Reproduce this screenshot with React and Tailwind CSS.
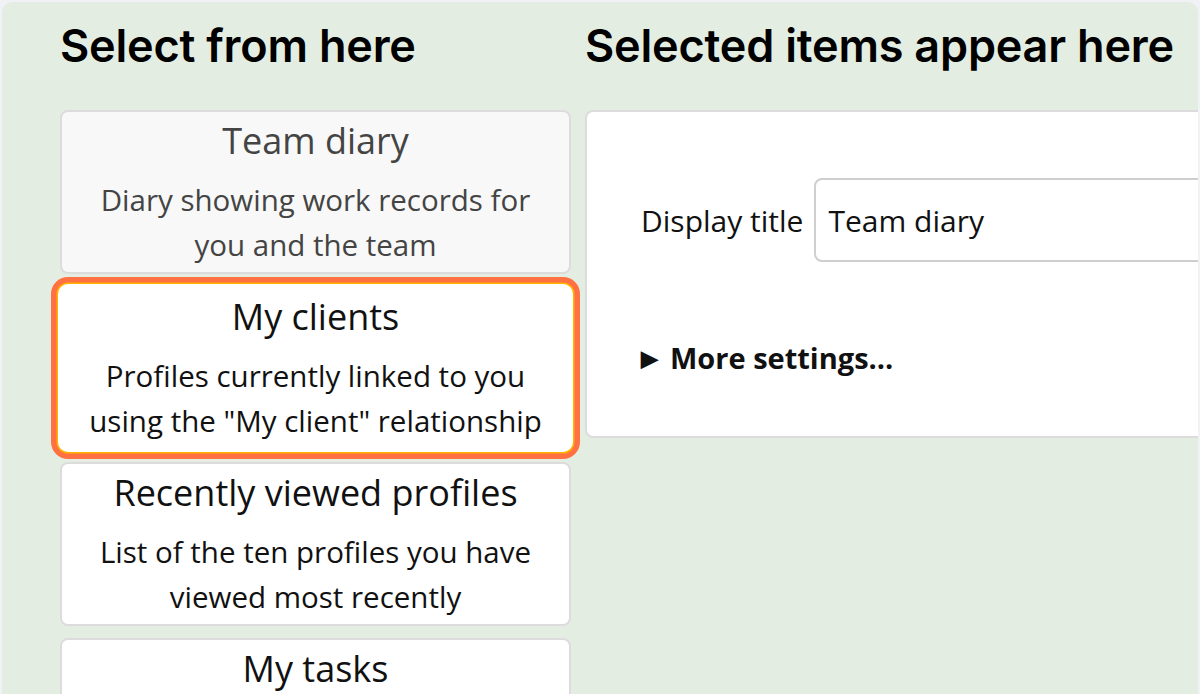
import React from 'react';

const items = [
  {
    id: 'team-diary',
    title: 'Team diary',
    description: 'Diary showing work records for you and the team',
    added: true,
  },
  {
    id: 'my-clients',
    title: 'My clients',
    description: 'Profiles currently linked to you using the "My client" relationship',
    focused: true,
  },
  {
    id: 'recent',
    title: 'Recently viewed profiles',
    description: 'List of the ten profiles you have viewed most recently',
  },
  {
    id: 'tasks',
    title: 'My tasks',
    description: 'Tasks assigned to you',
  },
];

const ItemCard = ({ item }) => {
  // focused card: white edge, thin yellow line, thick orange ring
  const look = item.focused
    ? 'border-white bg-white text-[#111] shadow-[0_0_0_2px_#fff,0_0_0_3.5px_#ffb300,0_0_0_9px_#ff7043]'
    : item.added
    ? 'border-[#dcdcdc] bg-[#f7f8f7] text-[#444]'
    : 'border-[#dcdcdc] bg-white text-[#111]';
  return (
    <div className={`rounded-[8px] border-2 px-3 pt-[5px] pb-[5px] text-center ${look}`}>
      <div className="text-[36px] leading-[48px]">{item.title}</div>
      <div className="mt-[12px] text-[29.5px] leading-[45px]">{item.description}</div>
    </div>
  );
};

const App = () => {
  return (
    <div className="w-[1200px] h-[694px] overflow-hidden bg-[#f1f2f5] px-[2px] pt-[2px] font-['Open_Sans',sans-serif]">
      <div className="h-[692px] overflow-hidden rounded-t-[10px] bg-[#e3ede2] pl-[58px]">
        <div className="grid grid-cols-[511px_640px] gap-x-[14px]">
          <h1 className="h-[108px] pt-[16px] text-[45px] leading-[56px] font-semibold tracking-[-0.2px] text-black font-['Inter',sans-serif]">
            Select from here
          </h1>
          <h1 className="h-[108px] pt-[16px] text-[45px] leading-[56px] font-semibold tracking-[-0.2px] text-black font-['Inter',sans-serif]">
            Selected items appear here
          </h1>

          <div className="flex flex-col gap-[12px]">
            {items.map((item) => (
              <ItemCard key={item.id} item={item} />
            ))}
          </div>

          <div className="self-start">
            <div className="h-[328px] rounded-[8px] border-2 border-[#dcdcdc] bg-white pl-[54px] pt-[66px]">
              <div className="flex items-center gap-[11px]">
                <label className="text-[30px] text-[#111]">Display title</label>
                <div className="flex h-[84px] flex-1 items-center rounded-[8px] border-2 border-[#cfcfcf] px-[12px] text-[30px] text-[#111]">
                  Team diary
                </div>
              </div>
              <div className="mt-[74px] flex items-center gap-[12px] text-[29px] font-bold text-[#111]">
                <span className="text-[22px]">▶</span>
                More settings...
              </div>
            </div>
          </div>
        </div>
      </div>
    </div>
  );
};

export default App;
